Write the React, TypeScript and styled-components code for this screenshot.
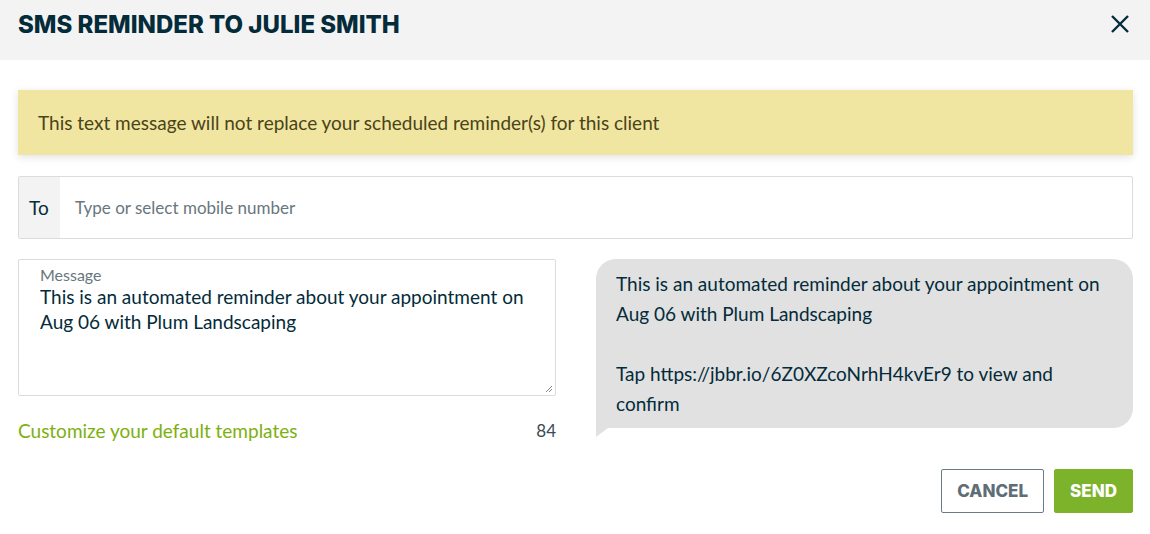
import React from "react";
import styled, { createGlobalStyle } from "styled-components";

const Global = createGlobalStyle`
  html, body { margin: 0; padding: 0; background: #fff; }
  body { font-family: "Lato", "Liberation Sans", sans-serif; color: #032b3a; }
  * { box-sizing: border-box; }
`;

const Dialog = styled.div`
  width: 1150px;
  height: 534px;
  display: flex;
  flex-direction: column;
  background: #fff;
`;

const Header = styled.header`
  height: 60px;
  background: #f3f3f3;
  display: flex;
  align-items: flex-start;
  justify-content: space-between;
  padding: 10px 18px 0 18px;
`;

const Title = styled.h1`
  margin: 0;
  font-family: "Inter", "Liberation Sans", sans-serif;
  font-weight: 800;
  font-size: 24px;
  line-height: 29px;
  letter-spacing: 0;
  color: #032b3a;
`;

const CloseButton = styled.button`
  border: 0;
  background: none;
  padding: 0;
  margin-top: 2px;
  width: 24px;
  height: 24px;
  display: flex;
  align-items: center;
  justify-content: center;
  color: #032b3a;
  cursor: pointer;
`;

const Body = styled.div`
  padding: 30px 17px 0 18px;
  display: flex;
  flex-direction: column;
`;

const Banner = styled.div`
  height: 65px;
  background: #f0e6a1;
  box-shadow: 0 2px 8px rgba(0, 0, 0, 0.12);
  display: flex;
  align-items: center;
  padding: 0 20px;
  font-size: 19px;
  color: #4a4319;
`;

const ToField = styled.div`
  margin-top: 21px;
  height: 63px;
  border: 1px solid #dcdcdc;
  border-radius: 2px;
  display: flex;
  align-items: stretch;
`;

const ToLabel = styled.div`
  width: 41px;
  background: #f3f3f3;
  display: flex;
  align-items: center;
  padding-left: 10px;
  font-size: 19px;
  color: #032b3a;
`;

const ToInput = styled.div`
  flex: 1;
  display: flex;
  align-items: center;
  padding-left: 15px;
  font-size: 17px;
  color: #68767e;
`;

const Columns = styled.div`
  margin-top: 20px;
  display: grid;
  grid-template-columns: 538px 537px;
  column-gap: 40px;
`;

const LeftCol = styled.div`
  display: flex;
  flex-direction: column;
`;

const MessageBox = styled.div`
  height: 137px;
  border: 1px solid #dcdcdc;
  border-radius: 2px;
  padding: 6px 18px 0 21px;
  position: relative;
`;

const FieldLabel = styled.div`
  font-size: 16px;
  color: #68767e;
  line-height: 18px;
`;

const MessageText = styled.div`
  font-size: 19px;
  line-height: 25px;
  color: #032b3a;
`;

const Grip = styled.svg`
  position: absolute;
  right: 2px;
  bottom: 2px;
`;

const MetaRow = styled.div`
  margin-top: 25px;
  display: flex;
  justify-content: space-between;
  font-size: 19px;
  line-height: 20px;
`;

const Link = styled.a`
  color: #7db00e;
  text-decoration: none;
`;

const Count = styled.span`
  color: #3d4b52;
  font-size: 17px;
`;

const Bubble = styled.div`
  position: relative;
  height: 169px;
  background: #e1e1e1;
  border-radius: 20px 20px 20px 0;
  padding: 10px 20px 0 20px;
  font-size: 19px;
  line-height: 30px;
  color: #032b3a;
  &::after {
    content: "";
    position: absolute;
    left: 0;
    bottom: -9px;
    border-top: 9px solid #e1e1e1;
    border-right: 12px solid transparent;
  }
`;

const Footer = styled.div`
  margin-top: 28px;
  display: flex;
  justify-content: flex-end;
  gap: 10px;
`;

const Button = styled.button<{ $primary?: boolean }>`
  height: 44px;
  padding: 0 15px;
  font-family: "Inter", "Liberation Sans", sans-serif;
  font-weight: 800;
  font-size: 17px;
  border-radius: 2px;
  cursor: pointer;
  border: 1px solid ${(p) => (p.$primary ? "#7db32a" : "#6b7b83")};
  background: ${(p) => (p.$primary ? "#7db32a" : "#fff")};
  color: ${(p) => (p.$primary ? "#fff" : "#5f6e76")};
`;

export default function App() {
  return (
    <>
      <Global />
      <Dialog>
        <Header>
          <Title>SMS REMINDER TO JULIE SMITH</Title>
          <CloseButton aria-label="Close">
            <svg width="20" height="20" viewBox="0 0 20 20">
              <path d="M2 2 L18 18 M18 2 L2 18" stroke="currentColor" strokeWidth="2.4" strokeLinecap="butt" />
            </svg>
          </CloseButton>
        </Header>
        <Body>
          <Banner>This text message will not replace your scheduled reminder(s) for this client</Banner>
          <ToField>
            <ToLabel>To</ToLabel>
            <ToInput>Type or select mobile number</ToInput>
          </ToField>
          <Columns>
            <LeftCol>
              <MessageBox>
                <FieldLabel>Message</FieldLabel>
                <MessageText>
                  This is an automated reminder about your appointment on Aug 06 with Plum Landscaping
                </MessageText>
                <Grip width="8" height="8" viewBox="0 0 8 8">
                  <path d="M1 7 L7 1 M4 7 L7 4" stroke="#888" strokeWidth="1" />
                </Grip>
              </MessageBox>
              <MetaRow>
                <Link href="#">Customize your default templates</Link>
                <Count>84</Count>
              </MetaRow>
            </LeftCol>
            <Bubble>
              This is an automated reminder about your appointment on Aug 06 with Plum Landscaping
              <br />
              <br />
              Tap https://jbbr.io/6Z0XZcoNrhH4kvEr9 to view and confirm
            </Bubble>
          </Columns>
          <Footer>
            <Button>CANCEL</Button>
            <Button $primary>SEND</Button>
          </Footer>
        </Body>
      </Dialog>
    </>
  );
}
